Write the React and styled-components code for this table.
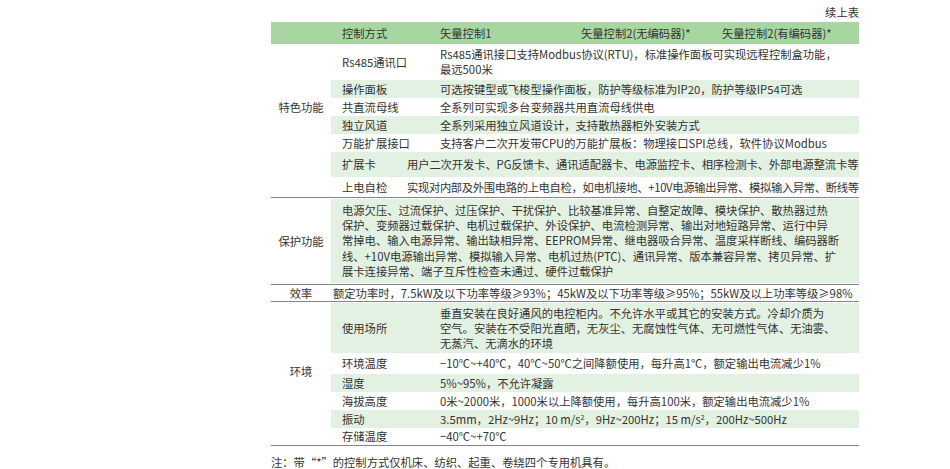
import React from 'react';
import styled, { createGlobalStyle } from 'styled-components';

const Global = createGlobalStyle`
  html, body { margin: 0; padding: 0; background: #ffffff; }
  body {
    font-family: "Noto Sans CJK SC", "Noto Sans", sans-serif;
    color: #333333;
  }
`;

const GREEN = '#a7d6a1';
const LIGHT = '#e3f1e2';
const RULE = '#858585';

const Page = styled.div`
  width: 950px;
  height: 469px;
  box-sizing: border-box;
  padding: 4px 91px 0 271px;
  font-size: 11.3px;
  overflow: hidden;
`;

const Caption = styled.div`
  height: 18px;
  line-height: 16px;
  text-align: right;
`;

const Header = styled.div`
  display: grid;
  grid-template-columns: 71px 98px 141px 141px 1fr;
  height: 22px;
  align-items: center;
  background: ${GREEN};
  white-space: nowrap;
`;

const Section = styled.div`
  display: flex;
  padding: ${(p) => p.$pad || '0'};
  border-bottom: 1px solid ${RULE};
`;

const Category = styled.div`
  width: 60px;
  flex-shrink: 0;
  text-align: center;
  line-height: 16px;
  padding-top: ${(p) => p.$top || 0}px;
  box-sizing: border-box;
`;

const Rows = styled.div`
  flex: 1;
  display: flex;
  flex-direction: column;
`;

const Row = styled.div`
  display: flex;
  align-items: center;
  height: ${(p) => p.$h}px;
  background: ${(p) => (p.$shade ? LIGHT : 'transparent')};
  white-space: nowrap;
`;

const Label = styled.div`
  width: ${(p) => p.$w || 109}px;
  flex-shrink: 0;
  box-sizing: border-box;
  padding-left: 11px;
  line-height: 15px;
`;

const Value = styled.div`
  flex: 1;
  line-height: ${(p) => p.$lh || 15}px;
  padding-left: ${(p) => p.$indent || 0}px;
  letter-spacing: ${(p) => p.$track || 0}px;
`;

const Note = styled.div`
  margin-top: 8px;
  line-height: 16px;
`;

const Sup = styled.sup`
  font-size: 7px;
  line-height: 0;
  vertical-align: 4px;
`;

export default function App() {
  return (
    <>
      <Global />
      <Page>
        <Caption>续上表</Caption>
        <Header>
          <span />
          <span>控制方式</span>
          <span>矢量控制1</span>
          <span>矢量控制2(无编码器)*</span>
          <span>矢量控制2(有编码器)*</span>
        </Header>

        <Section>
          <Category $top={55}>特色功能</Category>
          <Rows>
            <Row $h={36}>
              <Label>Rs485通讯口</Label>
              <Value>
                Rs485通讯接口支持Modbus协议(RTU)，标准操作面板可实现远程控制盒功能，
                <br />
                最远500米
              </Value>
            </Row>
            <Row $h={18} $shade>
              <Label>操作面板</Label>
              <Value>可选按键型或飞梭型操作面板，防护等级标准为IP20，防护等级IP54可选</Value>
            </Row>
            <Row $h={18}>
              <Label>共直流母线</Label>
              <Value>全系列可实现多台变频器共用直流母线供电</Value>
            </Row>
            <Row $h={18} $shade>
              <Label>独立风道</Label>
              <Value>全系列采用独立风道设计，支持散热器柜外安装方式</Value>
            </Row>
            <Row $h={18}>
              <Label>万能扩展接口</Label>
              <Value>支持客户二次开发带CPU的万能扩展板：物理接口SPI总线，软件协议Modbus</Value>
            </Row>
            <Row $h={25} $shade>
              <Label $w={76}>扩展卡</Label>
              <Value $track={-0.1}>用户二次开发卡、PG反馈卡、通讯适配器卡、电源监控卡、相序检测卡、外部电源整流卡等</Value>
            </Row>
            <Row $h={20}>
              <Label $w={76}>上电自检</Label>
              <Value $track={-0.33}>实现对内部及外围电路的上电自检，如电机接地、+10V电源输出异常、模拟输入异常、断线等</Value>
            </Row>
          </Rows>
        </Section>

        <Section $pad="1px 0">
          <Category $top={34}>保护功能</Category>
          <Rows>
            <Row $h={84} $shade>
              <Value $lh={15.2} $indent={11}>
                电源欠压、过流保护、过压保护、干扰保护、比较基准异常、自整定故障、模块保护、散热器过热
                <br />
                保护、变频器过载保护、电机过载保护、外设保护、电流检测异常、输出对地短路异常、运行中异
                <br />
                常掉电、输入电源异常、输出缺相异常、EEPROM异常、继电器吸合异常、温度采样断线、编码器断
                <br />
                线、+10V电源输出异常、模拟输入异常、电机过热(PTC)、通讯异常、版本兼容异常、拷贝异常、扩
                <br />
                展卡连接异常、端子互斥性检查未通过、硬件过载保护
              </Value>
            </Row>
          </Rows>
        </Section>

        <Section>
          <Category $top={0}>效率</Category>
          <Rows>
            <Row $h={16}>
              <Value $indent={2}>
                额定功率时，7.5kW及以下功率等级≥93%；45kW及以下功率等级≥95%；55kW及以上功率等级≥98%
              </Value>
            </Row>
          </Rows>
        </Section>

        <Section $pad="1px 0 0">
          <Category $top={60}>环境</Category>
          <Rows>
            <Row $h={50} $shade>
              <Label>使用场所</Label>
              <Value>
                垂直安装在良好通风的电控柜内。不允许水平或其它的安装方式。冷却介质为
                <br />
                空气。安装在不受阳光直晒，无灰尘、无腐蚀性气体、无可燃性气体、无油雾、
                <br />
                无蒸汽、无滴水的环境
              </Value>
            </Row>
            <Row $h={21}>
              <Label>环境温度</Label>
              <Value>−10℃~+40℃，40℃~50℃之间降额使用，每升高1℃，额定输出电流减少1%</Value>
            </Row>
            <Row $h={18} $shade>
              <Label>湿度</Label>
              <Value>5%~95%，不允许凝露</Value>
            </Row>
            <Row $h={18}>
              <Label>海拔高度</Label>
              <Value>0米~2000米，1000米以上降额使用，每升高100米，额定输出电流减少1%</Value>
            </Row>
            <Row $h={18} $shade>
              <Label>振动</Label>
              <Value>
                3.5mm，2Hz~9Hz；10 m/s<Sup>2</Sup>，9Hz~200Hz；15 m/s<Sup>2</Sup>，200Hz~500Hz
              </Value>
            </Row>
            <Row $h={17}>
              <Label>存储温度</Label>
              <Value>−40℃~+70℃</Value>
            </Row>
          </Rows>
        </Section>

        <Note>注：带“*”的控制方式仅机床、纺织、起重、卷绕四个专用机具有。</Note>
      </Page>
    </>
  );
}
